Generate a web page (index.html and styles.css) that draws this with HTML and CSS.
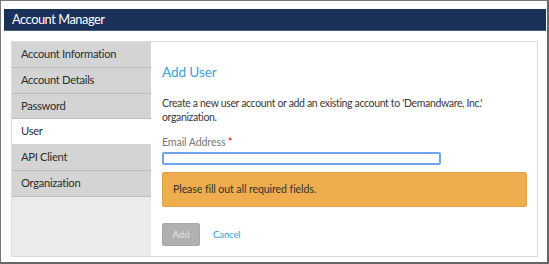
FILE: index.html
```html
<!DOCTYPE html>
<html lang="en">
<head>
  <meta charset="UTF-8" />
  <title>Account Manager</title>
  <link rel="stylesheet" href="styles.css">
</head>
<body>
  <div class="frame">
    <header class="title-bar">Account Manager</header>

    <div class="panel">
      <nav class="side-nav">
        <a href="#">Account Information</a>
        <a href="#">Account Details</a>
        <a href="#">Password</a>
        <a href="#" class="active">User</a>
        <a href="#">API Client</a>
        <a href="#">Organization</a>
      </nav>

      <main class="content">
        <h2>Add User</h2>
        <p class="intro">Create a new user account or add an existing account to 'Demandware, Inc.' organization.</p>

        <label class="field-label" for="email">Email Address <span class="req">*</span></label>
        <input type="text" id="email" class="field-input">

        <div class="alert">Please fill out all required fields.</div>

        <div class="actions">
          <button class="btn-add" disabled>Add</button>
          <a href="#" class="cancel">Cancel</a>
        </div>
      </main>
    </div>
  </div>
</body>
</html>
```

FILE: styles.css
```css
*, *::before, *::after {
  box-sizing: border-box;
}

body {
  margin: 0;
  font-family: 'Lato', 'Open Sans', sans-serif;
  background: #fff;
  color: #3e3e3e;
}

.frame {
  width: 549px;
  height: 264px;
  border-top: 1px solid #777;
  border-left: 1px solid #777;
  border-right: 2px solid #666;
  border-bottom: 2px solid #666;
  padding: 8px 1px 0 3px;
  background: #fff;
}

.title-bar {
  background: #1a3159;
  color: #fff;
  font-size: 12.8px;
  letter-spacing: -0.45px;
  height: 22px;
  line-height: 21px;
  padding-left: 8px;
  border-bottom: 1px solid #4a5d80;
}

.panel {
  display: flex;
  margin: 10px 8px 0 7px;
  height: 216px;
  border: 1px solid #dcdcdc;
}

.side-nav {
  width: 139px;
  background: #ebebeb;
  display: flex;
  flex-direction: column;
}

.side-nav a {
  display: block;
  height: 25.8px;
  line-height: 24px;
  padding-left: 9px;
  font-size: 11.2px;
  letter-spacing: -0.3px;
  color: #2e2e2e;
  text-decoration: none;
  background: #d4d4d4;
  border-bottom: 1px solid #bdbdbd;
}

.side-nav a.active {
  background: #fff;
  border-bottom-color: #d4d4d4;
}

.content {
  flex: 1;
  padding: 0 10px 0 11px;
}

.content h2 {
  margin: 22px 0 0;
  font-size: 13.6px;
  letter-spacing: -0.1px;
  font-weight: 400;
  color: #3ba1d9;
}

.intro {
  margin: 16px 0 0;
  font-size: 10.5px;
  letter-spacing: -0.35px;
  line-height: 14px;
  color: #3a3a3a;
}

.field-label {
  display: block;
  margin-top: 12px;
  font-size: 10.6px;
  letter-spacing: -0.1px;
  color: #777;
}

.req {
  color: #d0021b;
}

.field-input {
  display: block;
  width: 279px;
  height: 13px;
  margin-top: 4px;
  padding: 0;
  border: 2px solid #6fa3ee;
  border-radius: 2px;
  outline: none;
  background: #fff;
}

.alert {
  margin-top: 7px;
  height: 35px;
  line-height: 33px;
  padding-left: 10px;
  background: #efad4e;
  border: 1px solid #e0a045;
  border-radius: 2px;
  font-size: 10.6px;
  letter-spacing: -0.1px;
  color: #333;
}

.actions {
  display: flex;
  align-items: center;
  gap: 13px;
  margin-top: 16px;
}

.btn-add {
  width: 38px;
  height: 23px;
  border: 1px solid #a8a8a8;
  border-radius: 2px;
  background: #b0b0b0;
  color: #e4e4e4;
  font-family: inherit;
  font-size: 9.5px;
  padding: 0;
}

.cancel {
  font-size: 9.6px;
  letter-spacing: -0.15px;
  color: #3ba1d9;
  text-decoration: none;
}
```
